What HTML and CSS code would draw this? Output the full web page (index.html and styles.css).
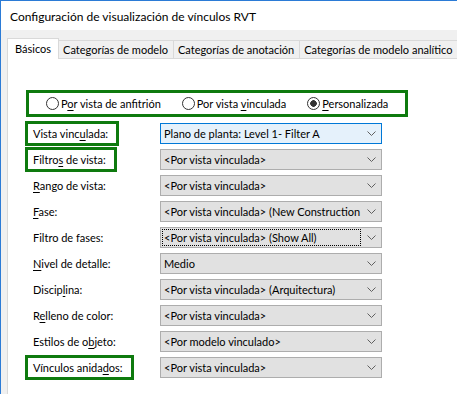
FILE: index.html
```html
<!DOCTYPE html>
<html lang="es">
<head>
    <meta charset="UTF-8">
    <title>Configuración de visualización de vínculos RVT</title>
    <link rel="stylesheet" href="styles.css">
</head>
<body>
<div class="window">
    <!-- barra de título -->
    <div class="titlebar">Configuración de visualización de vínculos RVT</div>

    <!-- pestañas -->
    <div class="tabs">
        <div class="tab active">Básicos</div>
        <div class="tab">Categorías de modelo</div>
        <div class="tab">Categorías de anotación</div>
        <div class="tab">Categorías de modelo analítico</div>
    </div>

    <div class="panel">
        <div class="mode-box">
            <label class="radio"><span class="circle"></span><span>P<u>o</u>r vista de anfitrión</span></label>
            <label class="radio"><span class="circle"></span><span>Por vista <u>v</u>inculada</span></label>
            <label class="radio"><span class="circle checked"></span><span><u>P</u>ersonalizada</span></label>
        </div>

        <div class="rows">
            <div class="row">
                <div class="lbl-col"><span class="lbl boxed">Vista vinc<u>u</u>lada:</span></div>
                <div class="combo current">
                    <span class="val">Plano de planta: Level 1- Filter A</span>
                    <svg class="chev" width="9" height="5" viewBox="0 0 9 5"><polyline points="0.5,0.5 4.5,4.5 8.5,0.5"/></svg>
                </div>
            </div>
            <div class="row">
                <div class="lbl-col"><span class="lbl boxed">Filtro<u>s</u> de vista:</span></div>
                <div class="combo">
                    <span class="val">&lt;Por vista vinculada&gt;</span>
                    <svg class="chev" width="9" height="5" viewBox="0 0 9 5"><polyline points="0.5,0.5 4.5,4.5 8.5,0.5"/></svg>
                </div>
            </div>
            <div class="row">
                <div class="lbl-col"><span class="lbl"><u>R</u>ango de vista:</span></div>
                <div class="combo">
                    <span class="val">&lt;Por vista vinculada&gt;</span>
                    <svg class="chev" width="9" height="5" viewBox="0 0 9 5"><polyline points="0.5,0.5 4.5,4.5 8.5,0.5"/></svg>
                </div>
            </div>
            <div class="row">
                <div class="lbl-col"><span class="lbl"><u>F</u>ase:</span></div>
                <div class="combo">
                    <span class="val">&lt;Por vista vinculada&gt; (New Construction</span>
                    <svg class="chev" width="9" height="5" viewBox="0 0 9 5"><polyline points="0.5,0.5 4.5,4.5 8.5,0.5"/></svg>
                </div>
            </div>
            <div class="row">
                <div class="lbl-col"><span class="lbl">Filtro de fases:</span></div>
                <div class="combo">
                    <span class="val focus">&lt;Por vista vinculada&gt; (Show All)</span>
                    <svg class="chev" width="9" height="5" viewBox="0 0 9 5"><polyline points="0.5,0.5 4.5,4.5 8.5,0.5"/></svg>
                </div>
            </div>
            <div class="row">
                <div class="lbl-col"><span class="lbl"><u>N</u>ivel de detalle:</span></div>
                <div class="combo">
                    <span class="val">Medio</span>
                    <svg class="chev" width="9" height="5" viewBox="0 0 9 5"><polyline points="0.5,0.5 4.5,4.5 8.5,0.5"/></svg>
                </div>
            </div>
            <div class="row">
                <div class="lbl-col"><span class="lbl">Discip<u>l</u>ina:</span></div>
                <div class="combo">
                    <span class="val">&lt;Por vista vinculada&gt; (Arquitectura)</span>
                    <svg class="chev" width="9" height="5" viewBox="0 0 9 5"><polyline points="0.5,0.5 4.5,4.5 8.5,0.5"/></svg>
                </div>
            </div>
            <div class="row">
                <div class="lbl-col"><span class="lbl">R<u>e</u>lleno de color:</span></div>
                <div class="combo">
                    <span class="val">&lt;Por vista vinculada&gt;</span>
                    <svg class="chev" width="9" height="5" viewBox="0 0 9 5"><polyline points="0.5,0.5 4.5,4.5 8.5,0.5"/></svg>
                </div>
            </div>
            <div class="row">
                <div class="lbl-col"><span class="lbl">Estilos de o<u>b</u>jeto:</span></div>
                <div class="combo">
                    <span class="val">&lt;Por modelo vinculado&gt;</span>
                    <svg class="chev" width="9" height="5" viewBox="0 0 9 5"><polyline points="0.5,0.5 4.5,4.5 8.5,0.5"/></svg>
                </div>
            </div>
            <div class="row">
                <div class="lbl-col"><span class="lbl boxed">Vínculos anida<u>d</u>os:</span></div>
                <div class="combo">
                    <span class="val">&lt;Por vista vinculada&gt;</span>
                    <svg class="chev" width="9" height="5" viewBox="0 0 9 5"><polyline points="0.5,0.5 4.5,4.5 8.5,0.5"/></svg>
                </div>
            </div>
        </div>
    </div>
</div>
</body>
</html>
```

FILE: styles.css
```css
/* diálogo estilo Windows */
body {
    margin: 0;
    font-family: Lato, "Liberation Sans", sans-serif;
    font-size: 11px;
    color: #000;
    overflow: hidden;
}

u {
    text-underline-offset: 2px;
}

.window {
    height: 394px;
    box-sizing: border-box;
    border-left: 1px solid #2b7bd6;
    border-top: 1px solid #2b7bd6;
    background-color: #f0f0f0;
    overflow: hidden;
}

.titlebar {
    height: 29px;
    line-height: 31px;
    padding-left: 9px;
    background-color: #fff;
    font-size: 12px;
}

.tabs {
    display: flex;
    align-items: flex-end;
    height: 20px;
    margin-top: 8px;
    padding-left: 6px;
}

.tab {
    height: 18px;
    line-height: 18px;
    box-sizing: border-box;
    padding: 0 5px 0 4px;
    border: 1px solid #d9d9d9;
    border-bottom: none;
    margin-left: -1px;
    white-space: nowrap;
}

.tab.active {
    height: 21px;
    line-height: 19px;
    margin-left: 0;
    margin-bottom: -1px;
    padding: 0 7px;
    background-color: #fff;
    position: relative;
    z-index: 1;
}

.panel {
    margin-left: 6px;
    margin-right: -10px;
    height: 400px;
    border: 1px solid #d9d9d9;
    background-color: #fff;
    padding: 31px 0 0 17px;
}

.mode-box {
    display: flex;
    align-items: center;
    gap: 21px;
    width: 382px;
    height: 27px;
    box-sizing: border-box;
    margin-left: 1px;
    padding-left: 17px;
    border: 3px solid #0e7a0e;
}

.radio {
    display: flex;
    align-items: center;
    gap: 2px;
    white-space: nowrap;
}

.circle {
    width: 13px;
    height: 13px;
    box-sizing: border-box;
    border: 1px solid #333;
    border-radius: 50%;
    background-color: #fff;
}

.circle.checked {
    background: radial-gradient(circle, #333 0, #333 3px, #fff 3.6px);
}

.rows {
    margin-top: 4px;
}

.row {
    display: flex;
    height: 26px;
}

.lbl-col {
    flex: 0 0 135px;
}

.lbl {
    display: inline-block;
    height: 25px;
    line-height: 19px;
    box-sizing: border-box;
    padding: 0 8px 0 5px;
    border: 3px solid transparent;
    white-space: nowrap;
}

.lbl.boxed {
    border-color: #0e7a0e;
}

.combo {
    display: flex;
    align-items: center;
    width: 222px;
    height: 21px;
    box-sizing: border-box;
    margin-top: 2px;
    border: 1px solid #adadad;
    background-color: #e1e1e1;
}

.combo.current {
    border-color: #0078d7;
    background-color: #e5f1fb;
}

.val {
    flex: 1;
    padding-left: 3px;
    white-space: nowrap;
    overflow: hidden;
}

.val.focus {
    height: 17px;
    line-height: 15px;
    box-sizing: border-box;
    margin-left: 1px;
    padding-left: 1px;
    border: 1px dotted #000;
}

.chev {
    flex: 0 0 9px;
    margin: 0 5px 0 6px;
}

.chev polyline {
    fill: none;
    stroke: #606060;
    stroke-width: 1;
}
```
